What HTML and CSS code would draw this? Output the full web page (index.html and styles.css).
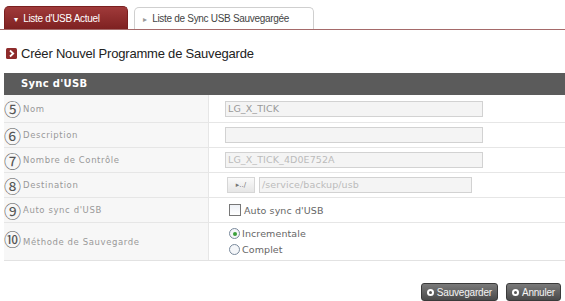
FILE: index.html
```html
<!DOCTYPE html>
<html lang="fr">
<head>
  <meta charset="UTF-8">
  <title>Sync d'USB</title>
  <link rel="stylesheet" href="styles.css">
</head>
<body>

<div class="page">
  <div class="tabs">
    <div class="tab active"><span class="tab-arrow">&#9662;</span> Liste d'USB Actuel</div>
    <div class="tab"><span class="tab-arrow">&#9656;</span> Liste de Sync USB Sauvegargée</div>
  </div>

  <div class="title">
    <span class="title-icon">
      <svg width="11" height="11" viewBox="0 0 11 11"><rect width="11" height="11" rx="1.5" fill="#8e2b2b"/><path d="M4 2.5 L7.2 5.5 L4 8.5" stroke="#fff" stroke-width="1.8" fill="none"/></svg>
    </span>
    Créer Nouvel Programme de Sauvegarde
  </div>

  <div class="panel">
    <div class="panel-head">Sync d'USB</div>

    <div class="row">
      <div class="label"><span class="num">&#9316;</span>Nom</div>
      <div class="field"><div class="input">LG_X_TICK</div></div>
    </div>
    <div class="row">
      <div class="label"><span class="num">&#9317;</span>Description</div>
      <div class="field"><div class="input"></div></div>
    </div>
    <div class="row">
      <div class="label"><span class="num">&#9318;</span>Nombre de Contrôle</div>
      <div class="field"><div class="input dim">LG_X_TICK_4D0E752A</div></div>
    </div>
    <div class="row">
      <div class="label"><span class="num">&#9319;</span>Destination</div>
      <div class="field">
        <div class="browse">&#9656;../</div>
        <div class="input dim short">/service/backup/usb</div>
      </div>
    </div>
    <div class="row">
      <div class="label"><span class="num">&#9320;</span>Auto sync d'USB</div>
      <div class="field"><span class="check"></span>Auto sync d'USB</div>
    </div>
    <div class="row tall">
      <div class="label"><span class="num up">&#9321;</span>Méthode de Sauvegarde</div>
      <div class="field radios">
        <div class="opt"><span class="radio on"></span>Incrementale</div>
        <div class="opt"><span class="radio"></span>Complet</div>
      </div>
    </div>
  </div>

  <div class="actions">
    <div class="btn"><span class="dot"></span>Sauvegarder</div>
    <div class="btn"><span class="dot"></span>Annuler</div>
  </div>
</div>

</body>
</html>
```

FILE: styles.css
```css
html, body {
  margin: 0;
  padding: 0;
  background-color: #ffffff;
  font-family: "Liberation Sans", Arial, sans-serif;
}

.page {
  width: 565px;
  padding-top: 6px;
}

.tabs {
  display: flex;
  gap: 6px;
  padding-left: 4px;
  border-bottom: 1px solid #a56a6a;
  height: 23px;
}

.tab {
  height: 22px;
  box-sizing: border-box;
  border: 1px solid #cfcfcf;
  border-bottom: none;
  border-radius: 5px 5px 0 0;
  background-color: #ffffff;
  color: #444;
  font-size: 10px;
  line-height: 21px;
  padding: 0 10px 0 8px;
  width: 180px;
  margin-top: 1px;
  letter-spacing: -0.3px;
}

.tab.active {
  width: 124px;
  height: 23px;
  margin-top: 0;
  border-color: #7a1f1f;
  background: linear-gradient(#a03a3a, #7e2121);
  color: #ffffff;
  line-height: 23px;
  padding-left: 9px;
}

.tab-arrow {
  font-size: 8px;
  color: #999;
  margin-right: 3px;
}

.tab.active .tab-arrow {
  color: #ffffff;
}

.title {
  display: flex;
  align-items: center;
  gap: 4px;
  padding: 13px 0 0 6px;
  height: 21px;
  font-size: 13px;
  color: #222;
  letter-spacing: -0.2px;
}

.title-icon {
  display: flex;
}

.panel {
  margin: 9px 0 0 4px;
  border-bottom: 1px solid #e2e2e2;
}

.panel-head {
  height: 22px;
  background-color: #5b5b5b;
  color: #ffffff;
  font-family: "DejaVu Sans", sans-serif;
  font-weight: bold;
  font-size: 10px;
  line-height: 22px;
  padding-left: 17px;
  letter-spacing: 0.3px;
}

.row {
  display: flex;
  height: 24px;
  border-top: 1px solid #e6e6e6;
}

.row:nth-child(2) {
  border-top: none;
  height: 27px;
}

.row.tall {
  height: 37px;
}

.label {
  width: 204px;
  background-color: #f7f7f7;
  border-right: 1px solid #e6e6e6;
  display: flex;
  align-items: center;
  font-family: "DejaVu Sans", sans-serif;
  font-size: 8.5px;
  color: #999;
  letter-spacing: 0.6px;
}

.num {
  width: 18px;
  font-family: "Noto Sans CJK KR", "DejaVu Sans", sans-serif;
  font-size: 17px;
  line-height: 17px;
  color: #555;
  letter-spacing: 0;
  margin-right: 1px;
}

.num.up {
  align-self: flex-start;
  margin-top: 7px;
}

.field {
  display: flex;
  align-items: center;
  padding-left: 16px;
  font-family: "DejaVu Sans", sans-serif;
  font-size: 9.5px;
  color: #666;
  letter-spacing: 0.1px;
}

.input {
  width: 258px;
  height: 16px;
  box-sizing: border-box;
  border: 1px solid #d2d2d2;
  background-color: #f4f4f4;
  font-size: 9.5px;
  line-height: 14px;
  padding-left: 2px;
  color: #999;
}

.input.dim {
  color: #bbb;
}

.input.short {
  width: 213px;
}

.browse {
  width: 28px;
  height: 16px;
  box-sizing: border-box;
  border: 1px solid #d6d6d6;
  background: linear-gradient(#fafafa, #e6e6e6);
  font-size: 7px;
  line-height: 14px;
  text-align: center;
  color: #777;
  margin: 0 4px 0 2px;
  letter-spacing: 0;
}

.check {
  width: 10px;
  height: 10px;
  border: 1px solid #777;
  background: linear-gradient(#eef1f6, #ffffff);
  margin: 0 3px 0 4px;
}

.radios {
  flex-direction: column;
  align-items: flex-start;
  justify-content: center;
  gap: 5px;
}

.opt {
  display: flex;
  align-items: center;
}

.radio {
  width: 9px;
  height: 9px;
  border: 1px solid #7a8a9c;
  border-radius: 50%;
  background: #f4f6f9;
  margin: 0 2px 0 4px;
  position: relative;
}

.radio.on::after {
  content: "";
  position: absolute;
  left: 2.5px;
  top: 2.5px;
  width: 4px;
  height: 4px;
  border-radius: 50%;
  background-color: #3aa03a;
}

.actions {
  display: flex;
  justify-content: flex-end;
  gap: 8px;
  padding: 22px 4px 0 0;
}

.btn {
  display: flex;
  align-items: center;
  height: 16px;
  padding: 0 5px 0 5px;
  border-radius: 3px;
  border: 1px solid #3a3a3a;
  background: linear-gradient(#7a7a7a, #4a4a4a);
  color: #f4f4f4;
  font-size: 10px;
  letter-spacing: -0.2px;
}

.dot {
  width: 7px;
  height: 7px;
  border-radius: 50%;
  background-color: #ffffff;
  margin-right: 3px;
  position: relative;
}

.dot::after {
  content: "";
  position: absolute;
  left: 2px;
  top: 2px;
  width: 3px;
  height: 3px;
  border-radius: 50%;
  background-color: #555;
}
```
